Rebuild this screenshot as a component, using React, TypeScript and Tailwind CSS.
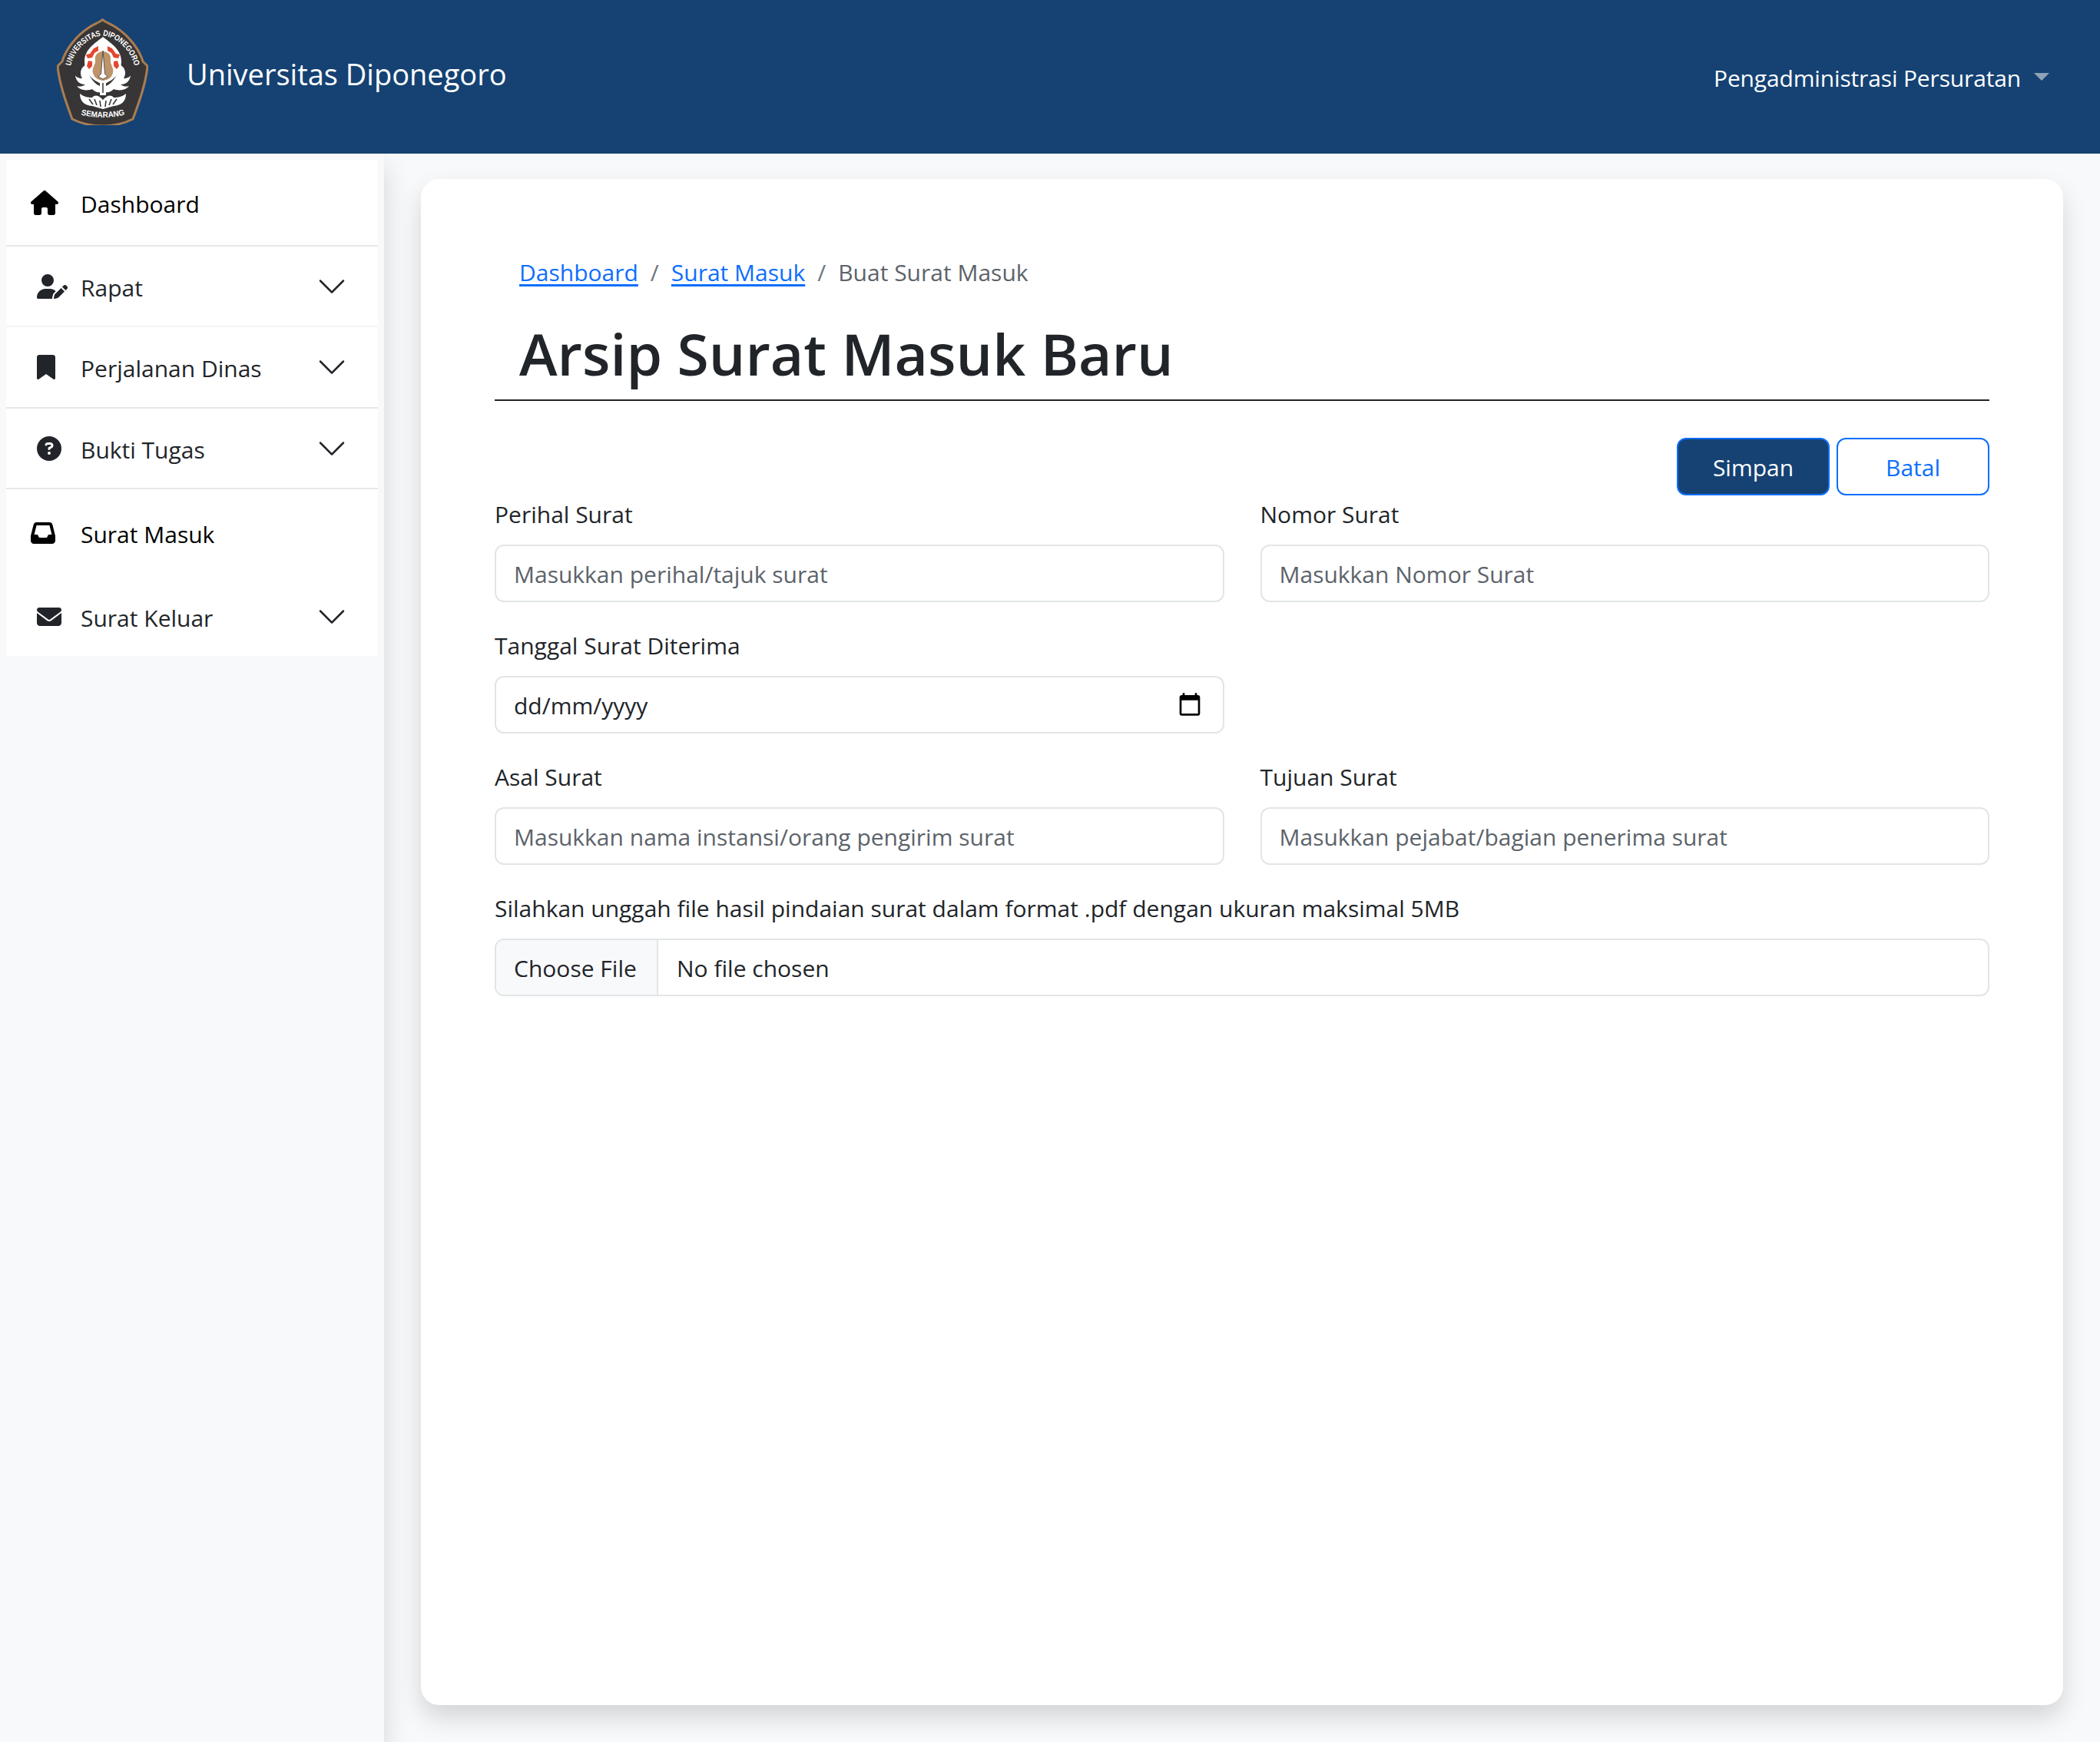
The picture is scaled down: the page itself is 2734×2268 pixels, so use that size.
import { ReactNode } from 'react';
import { FaHouse, FaUserPen, FaBookmark, FaCircleQuestion, FaInbox, FaEnvelope } from 'react-icons/fa6';

function Logo() {
  return (
    <svg viewBox="0 0 119 139" className="w-[119px] h-[139px] shrink-0 mb-[13px]">
      <defs>
        <path id="arc-top" d="M17 68 C20 42 40 25 59.5 22 C79 25 99 42 102 68" />
        <path id="arc-bottom" d="M30 125 Q59.5 133 90 125" />
      </defs>
      <path
        d="M59.5 1.5 C63 5 70 7 76 11 C95 23 108 42 112 56 L118 62 C116 85 106 112 99 131 C75 143 44 143 20 131 C13 112 3 85 1 62 L7 56 C11 42 24 23 43 11 C49 7 56 5 59.5 1.5 Z"
        fill="#383536"
        stroke="#a97d52"
        strokeWidth="3"
      />
      <text fontSize="10.5" fontWeight="700" fill="#fff" fontFamily="'Liberation Sans', sans-serif">
        <textPath href="#arc-top" startOffset="50%" textAnchor="middle" textLength="122" lengthAdjust="spacingAndGlyphs">UNIVERSITAS DIPONEGORO</textPath>
      </text>
      <text fontSize="10.5" fontWeight="700" fill="#fff" fontFamily="'Liberation Sans', sans-serif">
        <textPath href="#arc-bottom" startOffset="50%" textAnchor="middle" textLength="58" lengthAdjust="spacingAndGlyphs">SEMARANG</textPath>
      </text>
      {/* inner white drop */}
      <path d="M60 24 C70 32 84 40 84 56 C84 70 76 80 60 86 C44 80 36 70 36 56 C36 40 50 32 60 24 Z" fill="#fff" />
      {/* red gear */}
      <path
        d="M48 39 L54 36 L54 42 L49 45 L46 51 L40 52 L38 47 L43 46 Z M72 39 L66 36 L66 42 L71 45 L74 51 L80 52 L82 47 L77 46 Z M41 55 L46 56 L46 62 L42 66 L39 62 Z M79 55 L74 56 L74 62 L78 66 L81 62 Z"
        fill="#e3472f"
      />
      {/* figure */}
      <path d="M60 43 C67 43 71 48 70 54 C69 60 75 64 73 71 C71 78 66 80 60 81 C54 80 49 78 47 71 C45 64 51 60 50 54 C49 48 53 43 60 43 Z" fill="#bd9469" />
      {/* dagger */}
      <path d="M60 42 L62.5 72 L66 76 L60 79 L54 76 L57.5 72 Z" fill="#fff" stroke="#3a3635" strokeWidth="0.8" />
      {/* leaves */}
      <path
        d="M38 60 C31 64 29 71 33 78 C28 78 25 76 24 74 C25 82 30 86 37 86 C33 89 29 89 26 88 C30 93 38 95 46 92 C50 96 54 97 56 96 L56 88 C47 84 39 72 38 60 Z M82 60 C89 64 91 71 87 78 C92 78 95 76 96 74 C95 82 90 86 83 86 C87 89 91 89 94 88 C90 93 82 95 74 92 C70 96 66 97 64 96 L64 88 C73 84 81 72 82 60 Z"
        fill="#fff"
      />
      <path d="M56 82 H64 V100 H56 Z" fill="#fff" />
      <path d="M60 84 V97" stroke="#3a3635" strokeWidth="1.5" fill="none" />
      {/* boat */}
      <path
        d="M30 98 C35 102 40 103 46 103 C50 99 54 100 60 106 C66 100 70 99 74 103 C80 103 85 102 90 98 C90 108 84 113 74 114 L60 118 L46 114 C36 113 30 108 30 98 Z"
        fill="#fff"
      />
      <path d="M42 105 L47 112 M49 105 L52 113 M56 107 L57 115 M64 107 L63 115 M71 105 L68 113 M78 105 L73 112" stroke="#3a3635" strokeWidth="1.6" fill="none" />
    </svg>
  );
}

function Chevron() {
  return (
    <svg viewBox="0 0 16 16" fill="#212529" className="w-10 h-10 shrink-0">
      <path fillRule="evenodd" d="M1.646 4.646a.5.5 0 0 1 .708 0L8 10.293l5.646-5.647a.5.5 0 0 1 .708.708l-6 6a.5.5 0 0 1-.708 0l-6-6a.5.5 0 0 1 0-.708z" />
    </svg>
  );
}

function NavItem({ icon, label, chevron, className }: { icon: ReactNode; label: string; chevron?: boolean; className: string }) {
  return (
    <div className={`flex items-center pl-[32px] pr-[40px] ${className}`}>
      <div className="w-[65px] shrink-0 flex items-center">{icon}</div>
      <span className="flex-1 pt-[3px]">{label}</span>
      {chevron && <Chevron />}
    </div>
  );
}

function Field({ label, placeholder }: { label: string; placeholder: string }) {
  return (
    <div>
      <label className="block h-[48px] leading-[48px] mb-[15px] text-[#212529]">{label}</label>
      <input
        type="text"
        placeholder={placeholder}
        className="block w-full h-[75px] px-[23px] pt-[2px] border-2 border-[#e2e5e8] rounded-xl bg-white outline-none placeholder:text-[#5c636a]"
      />
    </div>
  );
}

export default function App() {
  return (
    <div className="min-h-screen flex flex-col bg-[#f8f9fa] text-[30px] text-[#212529] font-['Open_Sans',sans-serif]">
      <header className="relative z-10 h-[200px] bg-[#154273] flex items-center justify-between pl-[74px] pr-[66px] text-white">
        <div className="flex items-center gap-[50px]">
          <Logo />
          <span className="text-[38px] mb-[8px]">Universitas Diponegoro</span>
        </div>
        <div className="flex items-center gap-[17px] mb-[-3px]">
          <span className="tracking-[-0.15px]">Pengadministrasi Persuratan</span>
          <span className="w-0 h-0 border-x-[10px] border-x-transparent border-t-[10px] border-t-[#8fa1b7] mb-[4px]" />
        </div>
      </header>

      <div className="flex flex-1">
        <aside className="w-[500px] shrink-0 pt-[8px] px-[8px] shadow-[0_16px_32px_rgba(0,0,0,0.15)]">
          <nav className="bg-white">
            <NavItem className="h-[113px] border-b-2 border-[#e5e7e9] text-black" icon={<FaHouse className="w-9 h-8 text-black" />} label="Dashboard" />
            <NavItem className="h-[105px] border-b-2 border-[#f3f4f5]" icon={<FaUserPen className="w-10 h-8 ml-2" />} label="Rapat" chevron />
            <NavItem className="h-[106px] border-b-2 border-[#e5e7e9]" icon={<FaBookmark className="w-6 h-8 ml-2" />} label="Perjalanan Dinas" chevron />
            <NavItem className="h-[105px] border-b-2 border-[#e5e7e9]" icon={<FaCircleQuestion className="w-8 h-8 ml-2" />} label="Bukti Tugas" chevron />
            <NavItem className="h-[114px] text-black" icon={<FaInbox className="w-8 h-8 text-black" />} label="Surat Masuk" />
            <NavItem className="h-[103px]" icon={<FaEnvelope className="w-8 h-8 ml-2" />} label="Surat Keluar" chevron />
          </nav>
        </aside>

        <main className="flex-1 flex pt-[33px] px-[48px] pb-[48px]">
          <div className="flex-1 bg-white rounded-3xl shadow-[0_16px_32px_rgba(0,0,0,0.15)] pt-[97px] px-[96px]">
            <div className="pl-[32px] flex items-center h-[48px] text-[#6c757d]">
              <a className="text-[#0d6efd] underline underline-offset-[4px]">Dashboard</a>
              <span className="mx-[16px]">/</span>
              <a className="text-[#0d6efd] underline underline-offset-[4px]">Surat Masuk</a>
              <span className="mx-[16px]">/</span>
              <span className="text-[#5c636a]">Buat Surat Masuk</span>
            </div>
            <h1 className="pl-[32px] h-[144px] pt-[32px] text-[75px] leading-[100px] font-semibold border-b-2 border-[#212529]">
              Arsip Surat Masuk Baru
            </h1>

            <div className="flex justify-end gap-[9px] mt-[48px] mb-[1px]">
              <button className="w-[199px] h-[75px] pt-[2px] rounded-xl bg-[#154273] border-2 border-[#0d6efd] text-white">Simpan</button>
              <button className="w-[199px] h-[75px] pt-[2px] rounded-xl bg-white border-2 border-[#0d6efd] text-[#0d6efd]">Batal</button>
            </div>

            <div className="grid grid-cols-2 gap-x-[47px] gap-y-[33px]">
              <Field label="Perihal Surat" placeholder="Masukkan perihal/tajuk surat" />
              <Field label="Nomor Surat" placeholder="Masukkan Nomor Surat" />
              <div>
                <label className="block h-[48px] leading-[48px] mb-[15px]">Tanggal Surat Diterima</label>
                <div className="h-[75px] px-[23px] border-2 border-[#e2e5e8] rounded-xl flex items-center justify-between">
                  <span className="pt-[1px]">dd/mm/yyyy</span>
                  <svg viewBox="0 0 24 24" fill="#000" className="w-8 h-8 mr-[4px] mb-[2px]">
                    <path d="M20 3h-1V1h-2v2H7V1H5v2H4c-1.1 0-2 .9-2 2v16c0 1.1.9 2 2 2h16c1.1 0 2-.9 2-2V5c0-1.1-.9-2-2-2zm0 18H4V8h16v13z" />
                  </svg>
                </div>
              </div>
              <div />
              <Field label="Asal Surat" placeholder="Masukkan nama instansi/orang pengirim surat" />
              <Field label="Tujuan Surat" placeholder="Masukkan pejabat/bagian penerima surat" />
              <div className="col-span-2">
                <label className="block h-[48px] leading-[48px] mb-[15px]">Silahkan unggah file hasil pindaian surat dalam format .pdf dengan ukuran maksimal 5MB</label>
                <div className="h-[75px] border-2 border-[#e2e5e8] rounded-xl flex items-center overflow-hidden">
                  <span className="h-full w-[211px] px-[23px] pt-[2px] flex items-center bg-[#f8f9fa] border-r-2 border-[#e2e5e8] whitespace-nowrap">Choose File</span>
                  <span className="ml-[24px] pt-[2px]">No file chosen</span>
                </div>
              </div>
            </div>
          </div>
        </main>
      </div>
    </div>
  );
}
